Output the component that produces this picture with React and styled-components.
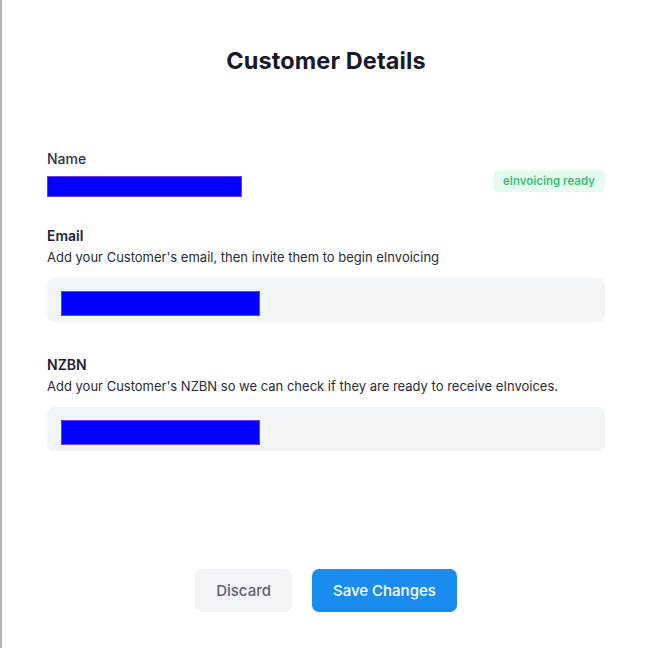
import React from "react"
import styled, { createGlobalStyle } from "styled-components"

const GlobalStyle = createGlobalStyle`
  html, body {
    margin: 0;
    padding: 0;
    background: #ffffff;
  }
  body {
    font-family: Inter, "Noto Sans", "Liberation Sans", sans-serif;
  }
`

const fields = [
  {
    label: "Email",
    hint: "Add your Customer's email, then invite them to begin eInvoicing",
  },
  {
    label: "NZBN",
    hint: "Add your Customer's NZBN so we can check if they are ready to receive eInvoices.",
  },
]

const App = () => (
  <>
    <GlobalStyle />
    <Modal>
      <Title>Customer Details</Title>
      <NameRow>
        <div>
          <FieldLabel className="light">Name</FieldLabel>
          <Redacted width={195} height={21} />
        </div>
        <Badge>eInvoicing ready</Badge>
      </NameRow>
      {fields.map((f) => (
        <Field key={f.label}>
          <FieldLabel>{f.label}</FieldLabel>
          <Hint>{f.hint}</Hint>
          <InputBox>
            <Redacted width={199} height={25} />
          </InputBox>
        </Field>
      ))}
      <Actions>
        <Button>Discard</Button>
        <Button className="primary">Save Changes</Button>
      </Actions>
    </Modal>
  </>
)

const Modal = styled.main`
  box-sizing: border-box;
  width: 645px;
  height: 648px;
  border-left: 2px solid #b4b4b8;
  padding: 46px 40px 0 45px;
  display: flex;
  flex-direction: column;
  background: #ffffff;
`

const Title = styled.h2`
  margin: 0;
  text-align: center;
  font-size: 23.5px;
  line-height: 30px;
  font-weight: 700;
  color: #181a2c;
  letter-spacing: 0.1px;
`

const NameRow = styled.section`
  margin-top: 74px;
  display: flex;
  justify-content: space-between;
  align-items: flex-end;
`

const FieldLabel = styled.div`
  font-size: 14px;
  line-height: 18px;
  font-weight: 600;
  color: #1f2133;

  &.light {
    font-weight: 500;
    color: #2e3040;
    margin-bottom: 8px;
  }
`

const Redacted = styled.div`
  box-sizing: border-box;
  width: ${(p) => p.width}px;
  height: ${(p) => p.height}px;
  background: #0000ff;
  border: 1px solid #6f3cf4;
`

const Badge = styled.span`
  box-sizing: border-box;
  height: 22px;
  padding: 0 10px;
  margin-bottom: 5px;
  display: flex;
  align-items: center;
  border-radius: 5px;
  background: #e5fbef;
  color: #3fbf78;
  font-size: 11.5px;
  font-weight: 600;
`

const Field = styled.section`
  margin-top: 30px;

  & + & {
    margin-top: 34px;
  }
`

const Hint = styled.p`
  margin: 3px 0 12px;
  font-size: 13px;
  line-height: 18px;
  color: #2a2b36;
`

const InputBox = styled.div`
  height: 44px;
  border-radius: 7px;
  background: #f2f5f8;
  padding: 13px 14px 0;
  box-sizing: border-box;
`

const Actions = styled.div`
  margin-top: auto;
  margin-bottom: 36px;
  display: flex;
  justify-content: center;
  gap: 20px;
`

const Button = styled.button`
  height: 43px;
  min-width: 95px;
  padding: 0 21px;
  border: none;
  border-radius: 7px;
  background: #f2f4f7;
  color: #5f6272;
  font-family: Inter, "Noto Sans", sans-serif;
  font-size: 15px;
  font-weight: 500;
  cursor: pointer;

  &.primary {
    background: #1a8cf0;
    color: #ffffff;
  }
`

export default App
